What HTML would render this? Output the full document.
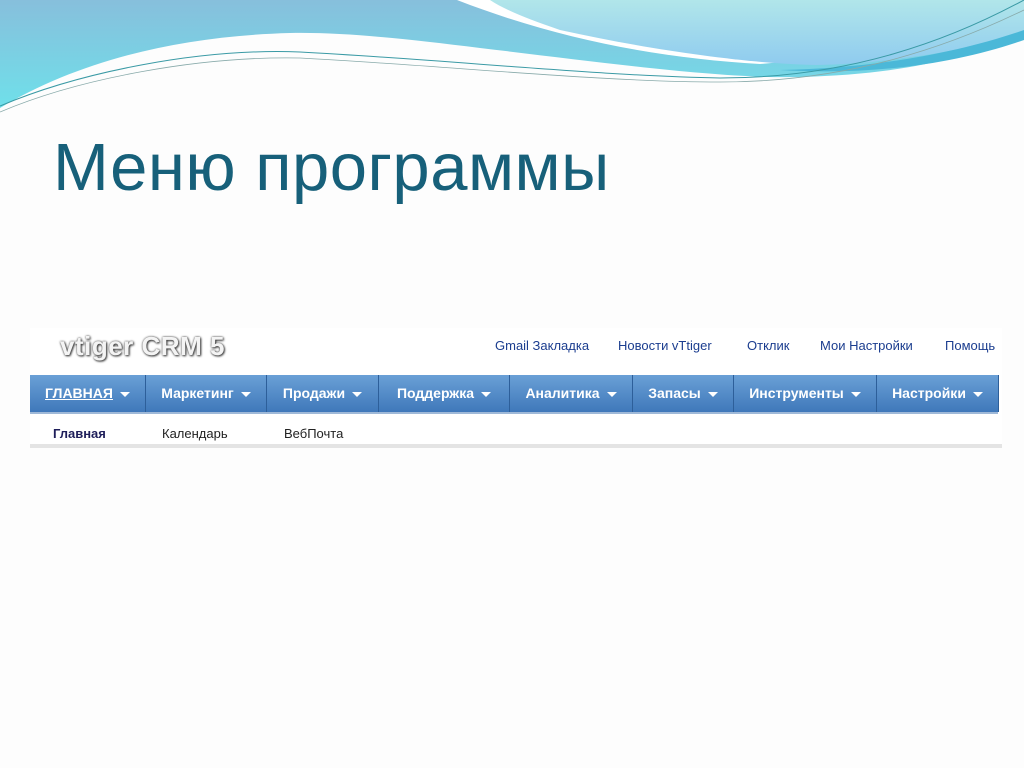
<!DOCTYPE html>
<html><head><meta charset="utf-8">
<style>
html,body{margin:0;padding:0}
body{width:1024px;height:768px;position:relative;overflow:hidden;background:#fdfdfd;font-family:"Liberation Sans","DejaVu Sans",sans-serif}
.title{position:absolute;left:53px;top:128px;font-size:67px;color:#17607a;letter-spacing:0.5px;white-space:nowrap;line-height:80px}
.shot{position:absolute;left:30px;top:328px;width:972px;height:120px;background:#fff}
.top a{position:absolute;top:10px;font-size:13px;color:#1b3d8f;white-space:nowrap}
.logo{position:absolute;left:30px;top:3px;font-size:26px;font-weight:bold;color:#f4f4f4;text-shadow:0 0 2px #444,1px 1px 2px #333;letter-spacing:0.5px}
.nav{position:absolute;left:0;top:47px;width:968px;height:37px;background:linear-gradient(#6aa0d6,#3f78ba);border-bottom:2px solid #9fb9d8}
.nav div{position:absolute;top:0;height:37px;line-height:37px;color:#fff;font-weight:bold;font-size:14px;border-right:1px solid #2d5f9a;text-align:center;white-space:nowrap}
.nav div::after{content:"";display:inline-block;margin-left:7px;border-left:5px solid transparent;border-right:5px solid transparent;border-top:5px solid #fff;vertical-align:middle}
.sub{position:absolute;top:98px;font-size:13px;color:#222}
.bot{position:absolute;left:0;top:116px;width:972px;height:4px;background:#e4e4e4}
</style></head><body>
<svg width="1024" height="130" style="position:absolute;left:0;top:0">
<defs>
<linearGradient id="g1" x1="0" y1="0" x2="0" y2="1"><stop offset="0" stop-color="#87bfdc"/><stop offset="1" stop-color="#6fe0ea"/></linearGradient>
<linearGradient id="g2" x1="0" y1="0" x2="0" y2="1"><stop offset="0" stop-color="#b1e6ea"/><stop offset="1" stop-color="#8fcbef"/></linearGradient>
</defs>
<path d="M0,0 H1024 V34 C960,60 900,74 800,77 C720,79 600,62 480,48 C400,38 340,32 290,33 C180,36 80,60 0,108 Z" fill="url(#g1)"/>
<path d="M457,0 C560,40 660,58 760,64 L1024,40 V0 Z" fill="#fff"/>
<path d="M490,0 H1024 V34 C960,52 880,64 817,65 C750,64 650,50 560,30 C530,20 505,10 490,0 Z" fill="url(#g2)"/>
<path d="M780,70 C880,68 960,52 1024,30 V40 C960,62 880,76 780,70Z" fill="#4bb8d8"/>
<path d="M0,106 C80,72 200,48 300,52 C450,60 600,76 720,78 C850,78 950,40 1024,0" fill="none" stroke="#3a9aa5" stroke-width="1"/>
<path d="M0,112 C80,78 200,56 300,58 C450,66 600,82 720,82 C850,82 950,46 1024,10" fill="none" stroke="#8aa" stroke-width="0.8"/>
</svg>
<div class="title">Меню программы</div>
<div class="shot">
<div class="logo">vtiger CRM 5</div>
<div class="top">
<a style="left:465px">Gmail Закладка</a>
<a style="left:588px">Новости vTtiger</a>
<a style="left:717px">Отклик</a>
<a style="left:790px">Мои Настройки</a>
<a style="left:915px">Помощь</a>
</div>
<div class="nav">
<div style="left:0;width:115px;text-decoration:underline">ГЛАВНАЯ</div>
<div style="left:116px;width:120px">Маркетинг</div>
<div style="left:237px;width:111px">Продажи</div>
<div style="left:349px;width:130px">Поддержка</div>
<div style="left:480px;width:122px">Аналитика</div>
<div style="left:603px;width:100px">Запасы</div>
<div style="left:704px;width:142px">Инструменты</div>
<div style="left:847px;width:121px">Настройки</div>
</div>
<div class="sub" style="left:23px;font-weight:bold;color:#1e1e5a">Главная</div>
<div class="sub" style="left:132px">Календарь</div>
<div class="sub" style="left:254px">ВебПочта</div>
<div class="bot"></div>
</div>
</body></html>
